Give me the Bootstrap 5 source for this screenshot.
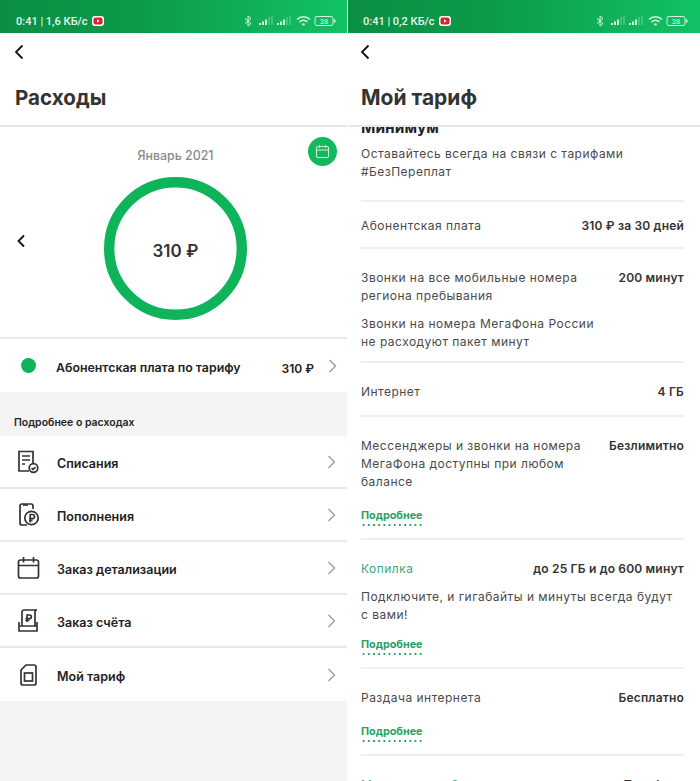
<!DOCTYPE html>
<html lang="ru"><head><meta charset="utf-8">
<link href="https://cdn.jsdelivr.net/npm/bootstrap@5.3.0/dist/css/bootstrap.min.css" rel="stylesheet">
<style>
html,body{margin:0;height:781px;overflow:hidden;background:#fff}
body{font-family:Inter,"Noto Sans",sans-serif;color:#333}
.phones{height:781px}
.phone{height:781px;overflow:hidden}
.phone-a{width:347px;background:#f4f4f4}
.phone-b{width:352px;background:#fff;margin-left:1px}
.sbar{height:33px;background:linear-gradient(90deg,#0b8f44 0%,#0c9a4b 40%,#12c265 100%);color:#e6f8ee;font:500 11px Roboto,sans-serif;padding:9px 11px 0 16px}
.phone-b .sbar{padding-left:15px;padding-right:12px}
.head{height:94px;background:#fff;border-bottom:2px solid #e7e7e7;padding:0 15px}
.phone-b .head{padding-left:13px}
.back{height:38px;margin-left:-1px}
.htitle{font-size:20.6px;font-weight:700;margin:0;line-height:26px;color:#333;padding-top:14px}
.phone-b .htitle{font-size:21px}
.chart{height:212px;background:#fff;position:relative;border-bottom:2px solid #e9e9e9}
.month{font-size:12.4px;font-weight:500;color:#8a8a8a;text-align:center;padding:20px 0 0 4px;line-height:18px}
.calbtn{position:absolute;left:308px;top:10px;width:29px;height:29px;border-radius:50%;background:#12b85c}
.ring{position:absolute;left:104px;top:50px}
.ringval{font-size:17px;font-weight:600;fill:#333}
.prev{position:absolute;left:16px;top:107px}
.feerow{height:53px;background:#fff;padding:0 10px 0 21px;font-size:12.35px;font-weight:600;color:#222}
.dot{width:15px;height:15px;border-radius:50%;background:#0fb45a;margin-right:20px}
.lbl{padding-top:6px}
.feesum{margin-right:14px;font-size:12px}
.sect{height:44px;font-size:10.5px;font-weight:600;color:#222;padding:24px 14px 0;line-height:14px}
.mrow{height:53px;background:#fff;border-bottom:2px solid #e9e9e9;padding:0 11px 0 17px;font-size:12.5px;font-weight:600;color:#222}
.mrow:last-child{border-bottom:0}
.mrow .ic{width:23px;margin-right:17px}
.scroll{height:654px;overflow:hidden;background:#fff;padding:0 16px 0 13px}
.clip{font-size:15.5px;font-weight:700;line-height:18px;margin-top:-8px;color:#222}
.ptxt{font-size:12px;line-height:18px;color:#4a4a4a;letter-spacing:.48px;margin:0}
.trow{border-bottom:2px solid #efefef;padding:20px 0 13px}
.intro{margin-top:8px;padding:0 0 19px}
.trow-first{padding:15px 0 12px}
.trow-call{padding-bottom:10px}
.trow-net{padding-bottom:14px}
.trow-link{padding-bottom:12px}
.trow-last{border-bottom:0}
.gap10{margin-top:10px}
.tval{font-size:12px;line-height:18px;font-weight:600;color:#333;white-space:nowrap;letter-spacing:.18px}
.teal{color:#3fa67c}
.more{display:block;width:max-content;font-size:10.8px;font-weight:700;color:#1fa463;line-height:13px;padding-bottom:4px;margin-top:18px;background:radial-gradient(circle,#1fa463 1.1px,transparent 1.3px) left bottom/5.2px 2.4px repeat-x}
.more-near{margin-top:14px}
.ytb{fill:#fff}.ytr{fill:#d8232a}
.stat{fill:none;stroke:#d5f3e2;stroke-width:1}
.statf{fill:#d5f3e2;stroke:none}
.stattxt{font:7.5px Roboto,sans-serif;fill:#d5f3e2;text-anchor:middle}
.lineic{fill:none;stroke:#333;stroke-width:1.7}
.chev{fill:none;stroke:#9a9a9a;stroke-width:1.3}
.backic{fill:none;stroke:#111;stroke-width:1.8}
</style></head><body>
<svg width="0" height="0" class="position-absolute">
 <symbol id="yt" viewBox="0 0 12 10"><rect class="ytb" width="12" height="10" rx="3"/><rect class="ytr" x="1.5" y="1.5" width="9" height="7" rx="2"/><path class="ytb" d="M5 3.2L7.6 5 5 6.800z"/></symbol>
 <symbol id="stat" viewBox="0 0 92 12"><g class="stat"><path d="M1 3.500l6 5-3 2.500V1l3 2.500-6 5"/><path opacity=".5" d="M25 2v8M28 1v9M43 2v8M46 1v9"/><path stroke-width="1.400" d="M53 4.500a9 9 0 0 1 13 0M55.500 7a5.500 5.500 0 0 1 8 0"/><rect x="71" y="1.500" width="18" height="9" rx="2"/></g><g class="statf"><rect x="15" y="8" width="2" height="2"/><rect x="18" y="6.500" width="2" height="3.500"/><rect x="21" y="4.500" width="2" height="5.500"/><rect x="33" y="8" width="2" height="2"/><rect x="36" y="6.500" width="2" height="3.500"/><rect x="39" y="4.500" width="2" height="5.500"/><circle cx="59.500" cy="9.500" r="1.200"/><rect x="90" y="4.500" width="1.500" height="3"/></g><text x="80" y="8.800" class="stattxt">38</text></symbol>
 <symbol id="chev" viewBox="0 0 9 14"><path class="chev" d="M1.500 1l6 6-6 6"/></symbol>
 <symbol id="back" viewBox="0 0 10 16"><path class="backic" d="M8.500 1.500L2 8l6.500 6.500"/></symbol>
</svg>
<div class="phones d-flex">
<div class="phone phone-a">
 <div class="sbar d-flex align-items-center justify-content-between">
  <div class="d-flex align-items-center gap-1"><span>0:41 | 1,6 КБ/с</span><svg width="12" height="10"><use href="#yt"/></svg></div>
  <div class="d-flex"><svg width="92" height="12"><use href="#stat"/></svg></div>
 </div>
 <div class="head">
  <div class="back d-flex align-items-center"><svg width="10" height="16"><use href="#back"/></svg></div>
  <h1 class="htitle">Расходы</h1>
 </div>
 <div class="chart">
  <div class="month">Январь 2021</div>
  <div class="calbtn d-flex align-items-center justify-content-center"><svg width="15" height="15" viewBox="0 0 15 15" fill="none" stroke="#c9f2da" stroke-width="1.100"><rect x="1.500" y="2.500" width="12" height="11" rx="1.500"/><path d="M1.500 6h12M4.500 1v3M10.500 1v3"/></svg></div>
  <svg class="ring" width="143" height="143" viewBox="0 0 143 143"><circle cx="71.500" cy="71.500" r="66.300" fill="none" stroke="#0fb45a" stroke-width="10.400"/><text x="71.500" y="80" text-anchor="middle" class="ringval">310 ₽</text></svg>
  <svg class="prev" width="10" height="14" viewBox="0 0 10 14"><path class="backic" d="M8 1.500L2.500 7 8 12.500"/></svg>
 </div>
 <div class="feerow d-flex align-items-center"><span class="dot"></span><span class="flex-grow-1 lbl">Абонентская плата по тарифу</span><span class="feesum lbl">310 ₽</span><svg width="9" height="14"><use href="#chev"/></svg></div>
 <div class="sect">Подробнее о расходах</div>
 <div>
  <div class="mrow d-flex align-items-center"><span class="ic d-flex"><svg width="23" height="24" viewBox="0 0 23 24" class="lineic"><path d="M12 21H2V1.500h14V13"/><path d="M5 6h8M5 10h8M5 14h3"/><circle cx="16.500" cy="18" r="4.300"/><path d="M14.500 18l1.500 1.500 2.500-2.500"/></svg></span><span class="flex-grow-1 lbl">Списания</span><svg width="9" height="14"><use href="#chev"/></svg></div>
  <div class="mrow d-flex align-items-center"><span class="ic d-flex"><svg width="23" height="24" viewBox="0 0 23 24" class="lineic"><path d="M16 6V3a2 2 0 0 0-2-2H5a2 2 0 0 0-2 2v17a2 2 0 0 0 2 2h5"/><path d="M6 2h5"/><circle cx="14.500" cy="15" r="6.700"/><path d="M13.200 19.500v-8h2.200a2 2 0 0 1 0 4.200h-3.200M12 17.500h3.500"/></svg></span><span class="flex-grow-1 lbl">Пополнения</span><svg width="9" height="14"><use href="#chev"/></svg></div>
  <div class="mrow d-flex align-items-center"><span class="ic d-flex"><svg width="23" height="22" viewBox="0 0 23 22" class="lineic"><rect x="1.500" y="3" width="20" height="18" rx="2"/><path d="M1.500 8.500h20M6.500 0v5.500M16.500 0v5.500"/></svg></span><span class="flex-grow-1 lbl">Заказ детализации</span><svg width="9" height="14"><use href="#chev"/></svg></div>
  <div class="mrow d-flex align-items-center"><span class="ic d-flex"><svg width="23" height="24" viewBox="0 0 23 24" class="lineic"><path d="M5 17V3a2 2 0 0 1 2-2h13c-1.500 0-2 1-2 2v14"/><path d="M2 13v9h18v-9M2 17h18"/><path d="M10 13V6h2.500a1.800 1.800 0 0 1 0 3.700H8.500M8.500 11.500h4"/></svg></span><span class="flex-grow-1 lbl">Заказ счёта</span><svg width="9" height="14"><use href="#chev"/></svg></div>
  <div class="mrow d-flex align-items-center"><span class="ic d-flex"><svg width="23" height="22" viewBox="0 0 23 22" class="lineic"><path d="M9 1h8a2 2 0 0 1 2 2v16a2 2 0 0 1-2 2H6a2 2 0 0 1-2-2V6z"/><rect x="7.500" y="9" width="8" height="8"/></svg></span><span class="flex-grow-1 lbl">Мой тариф</span><svg width="9" height="14"><use href="#chev"/></svg></div>
 </div>
</div>
<div class="phone phone-b">
 <div class="sbar d-flex align-items-center justify-content-between">
  <div class="d-flex align-items-center gap-1"><span>0:41 | 0,2 КБ/с</span><svg width="12" height="10"><use href="#yt"/></svg></div>
  <div class="d-flex"><svg width="92" height="12"><use href="#stat"/></svg></div>
 </div>
 <div class="head">
  <div class="back d-flex align-items-center"><svg width="10" height="16"><use href="#back"/></svg></div>
  <h1 class="htitle">Мой тариф</h1>
 </div>
 <div class="scroll">
  <div class="clip">Минимум</div>
  <div class="trow ptxt intro">Оставайтесь всегда на связи с тарифами<br>#БезПереплат</div>
  <div class="trow trow-first d-flex justify-content-between"><span class="ptxt">Абонентская плата</span><span class="tval">310 ₽ за 30 дней</span></div>
  <div class="trow trow-call">
   <div class="d-flex justify-content-between"><span class="ptxt">Звонки на все мобильные номера<br>региона пребывания</span><span class="tval">200 минут</span></div>
   <p class="ptxt gap10">Звонки на номера МегаФона России<br>не расходуют пакет минут</p>
  </div>
  <div class="trow trow-net d-flex justify-content-between"><span class="ptxt">Интернет</span><span class="tval">4 ГБ</span></div>
  <div class="trow trow-link">
   <div class="d-flex justify-content-between"><span class="ptxt">Мессенджеры и звонки на номера<br>МегаФона доступны при любом<br>балансе</span><span class="tval">Безлимитно</span></div>
   <a class="more text-decoration-none">Подробнее</a>
  </div>
  <div class="trow trow-link">
   <div class="d-flex justify-content-between"><span class="ptxt teal">Копилка</span><span class="tval">до 25 ГБ и до 600 минут</span></div>
   <p class="ptxt gap10">Подключите, и гигабайты и минуты всегда будут<br>с вами!</p>
   <a class="more more-near text-decoration-none">Подробнее</a>
  </div>
  <div class="trow trow-link">
   <div class="d-flex justify-content-between"><span class="ptxt">Раздача интернета</span><span class="tval">Бесплатно</span></div>
   <a class="more text-decoration-none">Подробнее</a>
  </div>
  <div class="trow trow-last d-flex justify-content-between"><span class="ptxt teal">Мессенджеры?</span><span class="tval">Тарифная</span></div>
 </div>
</div>
</div>
</body></html>
